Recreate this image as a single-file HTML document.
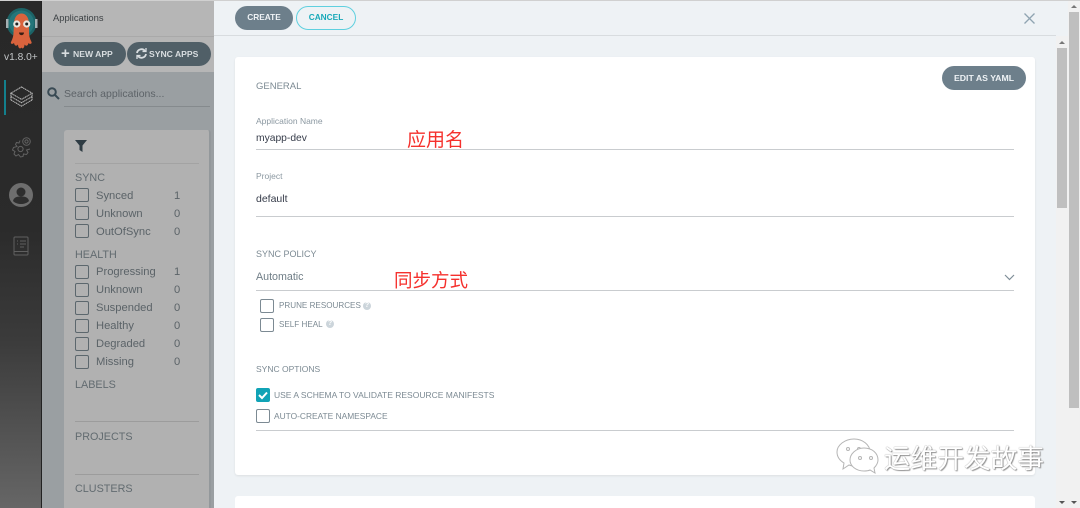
<!DOCTYPE html>
<html><head><meta charset="utf-8"><style>
*{box-sizing:border-box}
html,body{margin:0;padding:0;width:1080px;height:508px;overflow:hidden;background:#eef2f5}
body{font-family:"Liberation Sans","Noto Sans CJK SC",sans-serif;position:relative}
.a{position:absolute;white-space:nowrap}
.f{color:#5b6368;font-size:11.2px;line-height:14px}
.s{color:#626b70;font-size:10.800px;line-height:14px}
.cb{position:absolute;width:14px;height:14px;border:1.500px solid #5c676d;border-radius:2px}
.cb2{position:absolute;width:14px;height:14px;border:1.500px solid #7c8a93;border-radius:2px;background:#fff}
.l{position:absolute;background:#c9cccf;height:1px}
.h{color:#7c8a93;line-height:12px}
.pill{position:absolute;background:#505f67;color:#d8dde0;border-radius:12px;font-size:8.600px;font-weight:bold;height:24px;line-height:24px}
</style></head><body>
<!-- sidebar -->
<div class="a" style="left:0;top:0;width:42px;height:508px;background:linear-gradient(#282828 0,#2b2b2b 230px,#3b3b3b 340px,#666 508px);border-right:1px solid #222"></div>
<svg class="a" style="left:0;top:0" width="42" height="52" viewBox="0 0 42 52">
<circle cx="21.500" cy="23" r="15" fill="#1c6366"/>
<circle cx="21.500" cy="23" r="12.500" fill="#24767a"/>
<rect x="6" y="19" width="2.500" height="9" fill="#a4b0b3"/>
<rect x="35" y="19" width="2.500" height="9" fill="#a4b0b3"/>
<path d="M14 24c0-7 3.500-10.500 7.500-10.500S29 17 29 24v9c0 3 1 6 2.500 9 .8 2-2 2.500-3 1-.5 3-2.500 3.500-4 1.500 0 3.500-2 5-3 3-1.500 2-3.500.5-3.500-3-1.500 2-3.500 1.500-4-1.500-1.500 1.500-3.800 1-3-1 1.500-3 2.500-6 2.500-9z" fill="#d9633d"/>
<circle cx="16.800" cy="24" r="3.600" fill="#e9e6df"/><circle cx="26.700" cy="24" r="3.600" fill="#e9e6df"/>
<circle cx="16.800" cy="24" r="1.500" fill="#222"/><circle cx="26.700" cy="24" r="1.500" fill="#222"/>
<path d="M19 32.500h5c0 3.500-5 3.500-5 0z" fill="#3a1e14"/>
</svg>
<div class="a" style="left:0;top:51px;width:38px;overflow:hidden;color:#c3c6c8;font-size:10.200px;line-height:14px;padding-left:4px">v1.8.0+3</div>
<div class="a" style="left:4px;top:80px;width:2px;height:35px;background:#13808d"></div>
<svg class="a" style="left:9px;top:85px" width="25" height="25" viewBox="0 0 26 26" fill="none" stroke="#c2c2c2" stroke-width="1" stroke-dasharray="1.500 .5">
<path d="M13 2L24 8.500 13 15 2 8.500z"/><path d="M2 12l11 6.500L24 12"/><path d="M2 15.500L13 22l11-6.500"/><path d="M2 8.500v7M24 8.500v7"/>
</svg>
<svg class="a" style="left:11px;top:136px" width="21" height="22" viewBox="0 0 21 22" fill="none" stroke="#626262" stroke-width="1">
<circle cx="15.500" cy="5.500" r="3.800"/><circle cx="15.500" cy="5.500" r="1.600"/>
<circle cx="9.500" cy="13" r="2.600"/>
<path d="M9 4.500l-1 2.500-2.500-.5-1 2 1.500 2-3.500 1-1 2.500 2.500 1.500-1 2.500 2 2 2.500-1.500 2 2.500 2.500-.5.5-2.500 3 .5 1.500-2-1.500-2.500 3.500-1"/>
</svg>
<svg class="a" style="left:9px;top:183px" width="24" height="24" viewBox="0 0 24 24">
<circle cx="12" cy="12" r="12" fill="#6e6e6e"/><circle cx="12" cy="9" r="4.500" fill="#2e2e2e"/><path d="M4 18c1-4 4-4.500 8-4.500s7 .5 8 4.500c-2 2-5 3-8 3s-6-1-8-3z" fill="#2e2e2e"/>
</svg>
<svg class="a" style="left:13px;top:235px" width="17" height="22" viewBox="0 0 17 22" fill="none" stroke="#5f5f5f" stroke-width="1">
<rect x="1" y="2" width="14" height="18" rx="1"/><path d="M1 16.500h14M4 6h1M4 9h1M7 6h6M7 9h6M7 12h4"/>
</svg>
<!-- left panel -->
<div class="a" style="left:42px;top:0;width:172px;height:72px;background:#b6b6b6"></div>
<div class="a" style="left:42px;top:36px;width:172px;height:1px;background:#a9a9a9"></div>
<div class="a" style="left:42px;top:72px;width:172px;height:436px;background:#9a9fa2"></div>
<div class="a" style="left:53px;top:11px;font-size:9.400px;line-height:13px;color:#3d4245">Applications</div>
<div class="pill" style="left:53px;top:42px;width:73px"><span class="a" style="left:8px;top:0;font-size:15px">+</span><span class="a" style="left:20px;top:0">NEW APP</span></div>
<div class="pill" style="left:127px;top:42px;width:84px"><svg class="a" style="left:9px;top:6px" width="11" height="11" viewBox="0 0 11 11" fill="none" stroke="#d8dde0" stroke-width="1.800"><path d="M1 5a4.500 4.500 0 0 1 8-2M10 6a4.500 4.500 0 0 1-8 2"/><path d="M10 0v3.500H6.500M1 11V7.500h3.500" stroke-width="1.300"/></svg><span class="a" style="left:22px;top:0">SYNC APPS</span></div>
<svg class="a" style="left:47px;top:87px" width="13" height="13" viewBox="0 0 13 13" fill="none" stroke="#394a54" stroke-width="2"><circle cx="5" cy="5" r="3.800"/><path d="M8 8l4 4"/></svg>
<div class="a" style="left:64px;top:87px;font-size:10.500px;line-height:14px;color:#5d6368">Search applications...</div>
<div class="a" style="left:64px;top:106px;width:146px;height:1px;background:#858a8d"></div>
<div class="a" style="left:64px;top:130px;width:147px;height:378px;background:#b1b1b1;border-radius:3px 3px 0 0;border-right:2px solid #93989b"></div>
<svg class="a" style="left:75px;top:140px" width="12" height="12" viewBox="0 0 12 12"><path d="M0 0h12L7.500 5.500V12L4.500 10V5.500z" fill="#2f3c44"/></svg>
<div class="l" style="left:75px;top:163px;width:124px;background:#a3a3a3"></div>
<div class="a s" style="left:75px;top:171px">SYNC</div>
<div class="cb" style="left:75px;top:188px"></div><div class="a f" style="left:96px;top:189px">Synced</div><div class="a f" style="left:174px;top:189px">1</div>
<div class="cb" style="left:75px;top:206px"></div><div class="a f" style="left:96px;top:207px">Unknown</div><div class="a f" style="left:174px;top:207px">0</div>
<div class="cb" style="left:75px;top:224px"></div><div class="a f" style="left:96px;top:225px">OutOfSync</div><div class="a f" style="left:174px;top:225px">0</div>
<div class="a s" style="left:75px;top:248px">HEALTH</div>
<div class="cb" style="left:75px;top:265px"></div><div class="a f" style="left:96px;top:265px">Progressing</div><div class="a f" style="left:174px;top:265px">1</div>
<div class="cb" style="left:75px;top:283px"></div><div class="a f" style="left:96px;top:283px">Unknown</div><div class="a f" style="left:174px;top:283px">0</div>
<div class="cb" style="left:75px;top:301px"></div><div class="a f" style="left:96px;top:301px">Suspended</div><div class="a f" style="left:174px;top:301px">0</div>
<div class="cb" style="left:75px;top:319px"></div><div class="a f" style="left:96px;top:319px">Healthy</div><div class="a f" style="left:174px;top:319px">0</div>
<div class="cb" style="left:75px;top:337px"></div><div class="a f" style="left:96px;top:337px">Degraded</div><div class="a f" style="left:174px;top:337px">0</div>
<div class="cb" style="left:75px;top:355px"></div><div class="a f" style="left:96px;top:355px">Missing</div><div class="a f" style="left:174px;top:355px">0</div>
<div class="a s" style="left:75px;top:378px">LABELS</div>
<div class="l" style="left:75px;top:421px;width:124px;background:#9c9c9c"></div>
<div class="a s" style="left:75px;top:430px">PROJECTS</div>
<div class="l" style="left:75px;top:474px;width:124px;background:#9c9c9c"></div>
<div class="a s" style="left:75px;top:482px">CLUSTERS</div>
<!-- main -->
<div class="a" style="left:0;top:0;width:1080px;height:1px;background:#d0d0d0"></div>
<div class="a" style="left:214px;top:35px;width:842px;height:1px;background:#d8dcdf"></div>
<div class="a" style="left:235px;top:6px;width:58px;height:24px;border-radius:12px;background:#6d7f8b;color:#eef2f5;font-size:8.300px;font-weight:bold;line-height:23px;text-align:center">CREATE</div>
<div class="a" style="left:296px;top:6px;width:60px;height:24px;border-radius:12px;border:1px solid #5fd0df;color:#18a9b9;font-size:8.300px;font-weight:bold;line-height:21px;text-align:center">CANCEL</div>
<svg class="a" style="left:1024px;top:13px" width="11" height="11" viewBox="0 0 11 11" stroke="#8fa4b1" stroke-width="1.300"><path d="M.5.5l10 10M10.500.5l-10 10"/></svg>
<!-- cards -->
<div class="a" style="left:235px;top:57px;width:800px;height:418px;background:#fff;border-radius:3px;box-shadow:0 1px 2px rgba(0,0,0,.08)"></div>
<div class="a" style="left:235px;top:496px;width:800px;height:12px;background:#fff;border-radius:3px 3px 0 0"></div>
<div class="a" style="left:942px;top:66px;width:84px;height:24px;border-radius:12px;background:#6d7f8b;color:#eef2f5;font-size:8.700px;font-weight:bold;line-height:24px;text-align:center">EDIT AS YAML</div>
<div class="a" style="left:256px;top:80px;font-size:9.500px;line-height:13px;color:#7c8a93">GENERAL</div>
<div class="a" style="left:256px;top:116px;font-size:8.500px;line-height:11px;color:#8b98a1">Application Name</div>
<div class="a" style="left:256px;top:132px;font-size:10.300px;line-height:14px;color:#363c4a">myapp-dev</div>
<div class="l" style="left:256px;top:149px;width:758px"></div>
<div class="a" style="left:407px;top:129px;font-size:19px;line-height:23px;color:#f5312d">应用名</div>
<div class="a" style="left:256px;top:171px;font-size:8.500px;line-height:11px;color:#8b98a1">Project</div>
<div class="a" style="left:256px;top:192px;font-size:10.500px;line-height:14px;color:#363c4a">default</div>
<div class="l" style="left:256px;top:216px;width:758px"></div>
<div class="a" style="left:256px;top:248px;font-size:9px;line-height:12px;color:#7c8a93">SYNC POLICY</div>
<div class="a" style="left:256px;top:270px;font-size:10.700px;line-height:14px;color:#6f7d86">Automatic</div>
<div class="l" style="left:256px;top:290px;width:758px"></div>
<div class="a" style="left:394px;top:269px;font-size:18.500px;line-height:23px;color:#f5312d">同步方式</div>
<svg class="a" style="left:1004px;top:274px" width="11" height="7" viewBox="0 0 11 7" fill="none" stroke="#7f8e98" stroke-width="1.200"><path d="M1 1l4.500 4.500L10 1"/></svg>
<div class="cb2" style="left:260px;top:299px"></div>
<div class="a h" style="left:279px;top:300px;font-size:8.100px">PRUNE RESOURCES</div>
<div class="a" style="left:363px;top:302px;width:8px;height:8px;border-radius:50%;background:#ccd5db;color:#fff;font-size:7px;line-height:8px;text-align:center;font-weight:bold">?</div>
<div class="cb2" style="left:260px;top:318px"></div>
<div class="a h" style="left:279px;top:319px;font-size:8.100px">SELF HEAL</div>
<div class="a" style="left:326px;top:320px;width:8px;height:8px;border-radius:50%;background:#ccd5db;color:#fff;font-size:7px;line-height:8px;text-align:center;font-weight:bold">?</div>
<div class="a" style="left:256px;top:363px;font-size:8.500px;line-height:12px;color:#7c8a93">SYNC OPTIONS</div>
<div class="a" style="left:256px;top:388px;width:14px;height:14px;border-radius:2px;background:#11a3b6"></div>
<svg class="a" style="left:256px;top:388px" width="14" height="14" viewBox="0 0 14 14" fill="none" stroke="#fff" stroke-width="2"><path d="M3 7l3 3 5-5.500"/></svg>
<div class="a h" style="left:274px;top:389px;font-size:8.500px">USE A SCHEMA TO VALIDATE RESOURCE MANIFESTS</div>
<div class="cb2" style="left:256px;top:409px"></div>
<div class="a h" style="left:274px;top:410px;font-size:8.400px">AUTO-CREATE NAMESPACE</div>
<div class="l" style="left:256px;top:430px;width:758px"></div>
<!-- scrollbars -->
<div class="a" style="left:1056px;top:36px;width:12px;height:472px;background:#f1f1f1"></div>
<div class="a" style="left:1068px;top:1px;width:12px;height:507px;background:#f1f1f1"></div>
<div class="a" style="left:1057px;top:48px;width:10px;height:160px;background:#bfbfbf"></div>
<div class="a" style="left:1069px;top:12px;width:10px;height:396px;background:#bfbfbf"></div>
<div class="a" style="left:1059px;top:41px;border:3px solid transparent;border-top:0;border-bottom:3px solid #777"></div>
<div class="a" style="left:1071px;top:5px;border:3px solid transparent;border-top:0;border-bottom:3px solid #777"></div>
<div class="a" style="left:1059px;top:501px;border:3px solid transparent;border-bottom:0;border-top:3px solid #555"></div>
<div class="a" style="left:1071px;top:501px;border:3px solid transparent;border-bottom:0;border-top:3px solid #555"></div>
<!-- watermark -->
<svg class="a" style="left:834px;top:438px" width="60" height="40" viewBox="0 0 60 40" fill="#fff" stroke="#b5b5b5" stroke-width="1">
<path d="M20 1c9 0 16 6 16 13 0 8-7 14-16 14-2 0-3 0-5-1l-6 4 1-6C5 22 3 18 3 14 3 7 11 1 20 1z"/>
<circle cx="14" cy="11" r="1.500" fill="#fff"/><circle cx="25" cy="11" r="1.500" fill="#fff"/>
<path d="M30 10c8 0 14 5 14 12 0 3-2 6-4 8l1 5-5-3c-2 1-4 1-6 1-8 0-14-5-14-11s6-12 14-12z"/>
<circle cx="26" cy="20" r="1.500" fill="#fff"/><circle cx="37" cy="20" r="1.500" fill="#fff"/>
</svg>
<div class="a" style="left:884px;top:444px;font-size:26.700px;line-height:30px;color:#fff;text-shadow:0 0 1px #777,1px 1px 1px #999">运维开发故事</div>
</body></html>
